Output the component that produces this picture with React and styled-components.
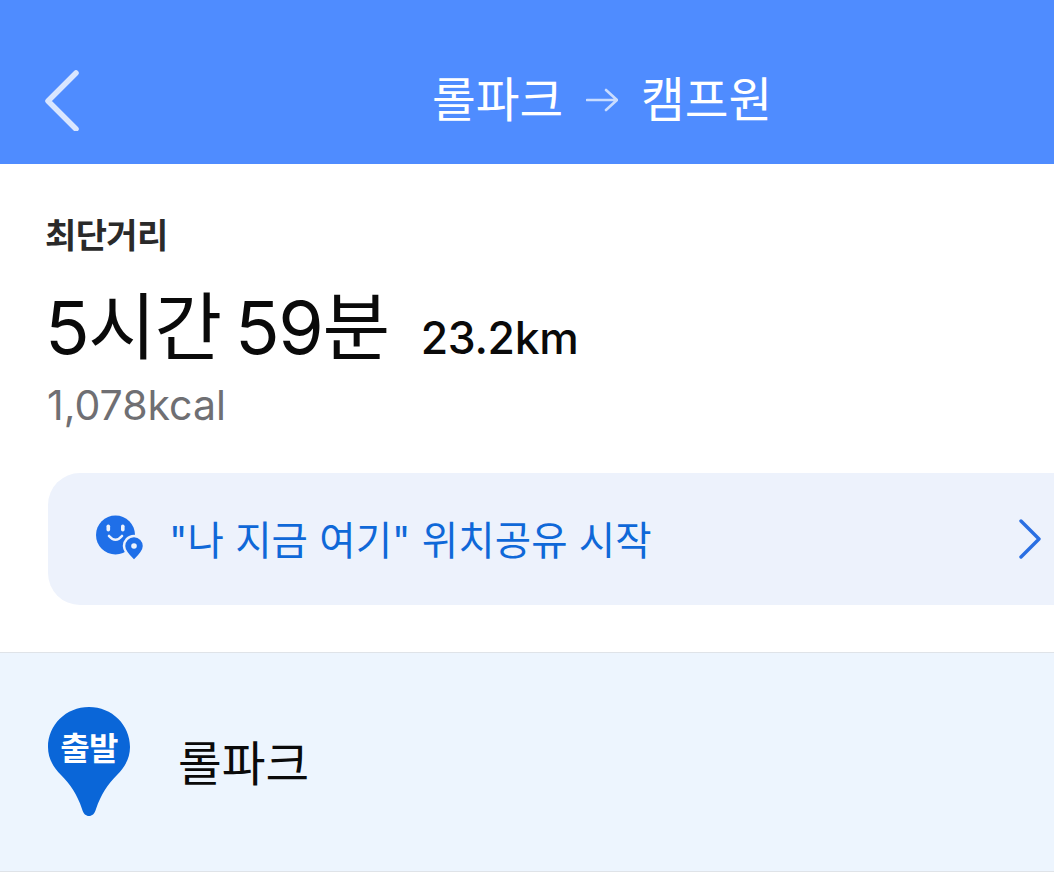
import React from "react";
import styled, { createGlobalStyle } from "styled-components";

const FONT = `Inter, "Noto Sans CJK KR", "Liberation Sans", sans-serif`;

const Global = createGlobalStyle`
  html, body { margin: 0; padding: 0; background: #fff; }
  body { font-family: ${FONT}; overflow: hidden; }
`;

const Page = styled.div`
  width: 1054px;
  height: 877px;
  overflow: hidden;
  display: flex;
  flex-direction: column;
`;

const Header = styled.header`
  height: 164px;
  background: #4f8cff;
  flex: none;
  display: flex;
  align-items: center;
  padding: 36px 0 0 44px;
  box-sizing: border-box;
  color: #fff;
`;

const HeaderTitle = styled.h1`
  margin: 0 0 0 352px;
  display: flex;
  align-items: center;
  gap: 23px;
  font-size: 47.5px;
  font-weight: 400;
  line-height: 56px;
  white-space: nowrap;
`;

const BackIcon = styled.svg`
  display: block;
  width: 36px;
  height: 62px;
  flex: none;
`;

const Summary = styled.section`
  padding: 52px 0 0 45px;
  height: 488px;
  box-sizing: border-box;
  flex: none;
`;

const RouteLabel = styled.div`
  font-size: 34px;
  font-weight: 700;
  line-height: 40px;
  color: #2a2a2a;
  letter-spacing: -0.6px;
`;

const TimeRow = styled.div`
  display: flex;
  align-items: baseline;
  gap: 32px;
  margin: 30px 0 0 0;
  color: #0a0a0a;
  white-space: nowrap;
`;

const Duration = styled.span`
  font-size: 73.5px;
  line-height: 84px;
  font-weight: 400;
  letter-spacing: -1.4px;
  word-spacing: -5px;
`;

const Distance = styled.span`
  font-size: 44.5px;
  font-weight: 500;
  letter-spacing: -0.3px;
`;

const Calories = styled.div`
  margin: 10px 0 0 2px;
  font-size: 41px;
  line-height: 50px;
  color: #6f6f73;
`;

const ShareBanner = styled.div`
  margin: 43px 0 0 3px;
  height: 132px;
  width: 1040px;
  box-sizing: border-box;
  padding: 0 46px 0 47px;
  border-radius: 32px;
  background: #edf2fc;
  display: flex;
  align-items: center;
  gap: 26px;
`;

const SmileyIcon = styled.svg`
  width: 50px;
  height: 48px;
  flex: none;
  margin-left: 1px;
`;

const ShareText = styled.span`
  font-size: 39.5px;
  color: #0f68d8;
  flex: 1;
  margin: -4px 0 0 -3px;
  letter-spacing: 0.1px;
  white-space: nowrap;
`;

const Chevron = styled.svg`
  width: 24px;
  height: 40px;
  flex: none;
`;

const StartRow = styled.section`
  height: 220px;
  box-sizing: border-box;
  flex: none;
  background: #edf5fe;
  border-top: 1px solid #dfe3e8;
  border-bottom: 1px solid #dfe3e8;
  padding: 0 0 0 48px;
  display: flex;
  align-items: center;
  gap: 48px;
`;

const PinWrap = styled.div`
  position: relative;
  width: 82px;
  height: 110px;
  flex: none;
  margin-top: -2px;
`;

const PinLabel = styled.span`
  position: absolute;
  top: 24px;
  left: 0;
  width: 82px;
  text-align: center;
  font-size: 32px;
  line-height: 38px;
  font-weight: 700;
  color: #fff;
  letter-spacing: -0.6px;
`;

const PlaceName = styled.span`
  font-size: 47.5px;
  color: #0a0a0a;
  margin-top: -4px;
`;

export default function App() {
  return (
    <Page>
      <Global />
      <Header>
        <BackIcon viewBox="0 0 36 62" fill="none">
          <path d="M32 4 L4 32 L32 60" stroke="#d9e6ff" strokeWidth="5.5" strokeLinecap="round" strokeLinejoin="round" />
        </BackIcon>
        <HeaderTitle>
          <span>롤파크</span>
          <svg width="32" height="24" viewBox="0 0 32 24" fill="none">
            <path d="M1 12 H30 M20 2 L31 12 L20 22" stroke="#c9dcff" strokeWidth="2.6" strokeLinecap="round" strokeLinejoin="round" />
          </svg>
          <span>캠프원</span>
        </HeaderTitle>
      </Header>
      <Summary>
        <RouteLabel>최단거리</RouteLabel>
        <TimeRow>
          <Duration>5시간 59분</Duration>
          <Distance>23.2km</Distance>
        </TimeRow>
        <Calories>1,078kcal</Calories>
        <ShareBanner>
          <SmileyIcon viewBox="0 0 50 48">
            <circle cx="19.5" cy="20" r="19.5" fill="#1f6fe8" />
            <rect x="10.5" y="9.5" width="3.6" height="7" rx="1.8" fill="#edf2fc" />
            <rect x="25" y="9.5" width="3.6" height="7" rx="1.8" fill="#edf2fc" />
            <path d="M13 21 Q19.5 28.5 26 21" stroke="#edf2fc" strokeWidth="2.6" fill="none" strokeLinecap="round" />
            <path d="M38 21 C32 21 28 26 28 31 C28 37 35 43 38 46 C41 43 48 37 48 31 C48 26 44 21 38 21 Z" fill="#1f6fe8" stroke="#edf2fc" strokeWidth="2.5" />
            <circle cx="38" cy="31" r="2.8" fill="#edf2fc" />
          </SmileyIcon>
          <ShareText>"나 지금 여기" 위치공유 시작</ShareText>
          <Chevron viewBox="0 0 24 40" fill="none">
            <path d="M3 2 L21 20 L3 38" stroke="#2a6fe2" strokeWidth="3.4" strokeLinecap="round" strokeLinejoin="round" />
          </Chevron>
        </ShareBanner>
      </Summary>
      <StartRow>
        <PinWrap>
          <svg width="82" height="110" viewBox="0 0 82 110">
            <path d="M41 1 C18 1 0 19 0 41 C0 52 5 61 13 69 C22 78 29 88 34 103 C35.5 108 38 110 41 110 C44 110 46.5 108 48 103 C53 88 60 78 69 69 C77 61 82 52 82 41 C82 19 64 1 41 1 Z" fill="#0a66d8" />
          </svg>
          <PinLabel>출발</PinLabel>
        </PinWrap>
        <PlaceName>롤파크</PlaceName>
      </StartRow>
    </Page>
  );
}
